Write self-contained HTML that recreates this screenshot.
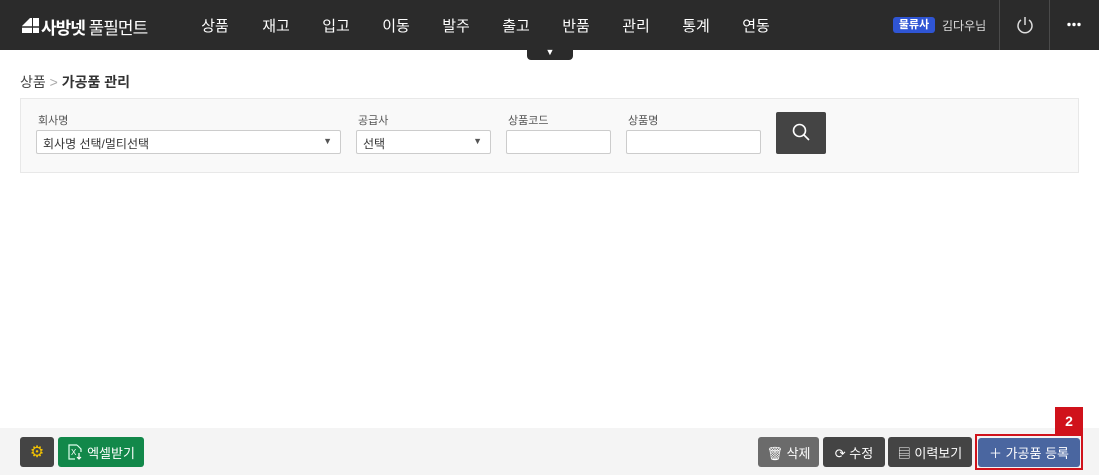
<!DOCTYPE html>
<html><head><meta charset="utf-8"><style>
*{margin:0;padding:0;box-sizing:border-box}
body{width:1099px;height:475px;position:relative;overflow:hidden;background:#fff;font-family:"Liberation Sans","Noto Sans CJK KR",sans-serif;color:#333}
.a{position:absolute}
.hd{left:0;top:0;width:1099px;height:50px;background:#2b2b2b}
.m{top:15px;color:#fff;font-size:15px;transform:translateX(-50%)}
.lbl{top:112px;font-size:11px;color:#555}
.in{top:130px;height:24px;border:1px solid #ccc;background:#fff;border-radius:2px;font-size:12px;padding:4px 6px;color:#333}
.btn{top:437px;height:30px;border-radius:3px;color:#fff;font-size:13px;display:flex;align-items:center;justify-content:center;gap:4px}
</style></head><body>
<div class="a hd"></div>
<svg class="a" style="left:22px;top:18px" width="17" height="15" viewBox="0 0 17 15"><path d="M0 8L8 0H10V15H0Z M11 0H17V15H11Z" fill="#fff"/><path d="M0 9H17" stroke="#2b2b2b" stroke-width="1.5"/></svg>
<div class="a" style="left:41px;top:14px;color:#fff;font-size:17px;font-weight:bold;letter-spacing:-1px">사방넷 <span style="font-weight:normal">풀필먼트</span></div>
<div class="a m" style="left:215px">상품</div><div class="a m" style="left:276px">재고</div><div class="a m" style="left:336px">입고</div><div class="a m" style="left:396px">이동</div><div class="a m" style="left:456px">발주</div><div class="a m" style="left:516px">출고</div><div class="a m" style="left:576px">반품</div><div class="a m" style="left:636px">관리</div><div class="a m" style="left:696px">통계</div><div class="a m" style="left:756px">연동</div>
<div class="a" style="left:527px;top:48px;width:46px;height:12px;background:#2b2b2b;border-radius:0 0 4px 4px;color:#fff;font-size:9px;text-align:center;line-height:9px">▼</div>
<div class="a" style="left:893px;top:17px;width:42px;height:16px;background:#2f55d4;border-radius:3px;color:#fff;font-size:11px;text-align:center;line-height:16px;font-weight:bold">물류사</div>
<div class="a" style="left:942px;top:17px;color:#ddd;font-size:12px">김다우님</div>
<div class="a" style="left:999px;top:0;width:1px;height:50px;background:#4a4a4a"></div>
<div class="a" style="left:1049px;top:0;width:1px;height:50px;background:#4a4a4a"></div>
<svg class="a" style="left:1015px;top:15px" width="20" height="20" viewBox="0 0 20 20"><path d="M6 5A7 7 0 1 0 14 5" fill="none" stroke="#ddd" stroke-width="1.5"/><path d="M10 2V10" stroke="#ddd" stroke-width="1.5"/></svg>
<svg class="a" style="left:1067px;top:22px" width="14" height="5" viewBox="0 0 14 5"><circle cx="2" cy="2.5" r="1.7" fill="#fff"/><circle cx="7" cy="2.5" r="1.7" fill="#fff"/><circle cx="12" cy="2.5" r="1.7" fill="#fff"/></svg>
<div class="a" style="left:20px;top:72px;font-size:14px;color:#444">상품 <span style="color:#aaa">&gt;</span> <b style="color:#333">가공품 관리</b></div>
<div class="a" style="left:20px;top:98px;width:1059px;height:75px;background:#f9f9f9;border:1px solid #e8e8e8"></div>
<div class="a lbl" style="left:38px">회사명</div><div class="a lbl" style="left:358px">공급사</div><div class="a lbl" style="left:508px">상품코드</div><div class="a lbl" style="left:628px">상품명</div>
<div class="a in" style="left:36px;width:305px">회사명 선택/멀티선택<span style="position:absolute;right:8px;top:5px;font-size:9px;color:#555">▼</span></div>
<div class="a in" style="left:356px;width:135px">선택<span style="position:absolute;right:8px;top:5px;font-size:9px;color:#555">▼</span></div>
<div class="a in" style="left:506px;width:105px"></div>
<div class="a in" style="left:626px;width:135px"></div>
<div class="a" style="left:776px;top:112px;width:50px;height:42px;background:#444;border-radius:2px"></div>
<svg class="a" style="left:791px;top:122px" width="20" height="20" viewBox="0 0 20 20"><circle cx="8.5" cy="8.5" r="6" fill="none" stroke="#fff" stroke-width="1.6"/><path d="M13 13L18 18" stroke="#fff" stroke-width="1.6"/></svg>
<div class="a" style="left:0;top:428px;width:1099px;height:47px;background:#f4f4f4"></div>
<div class="a btn" style="left:20px;width:34px;background:#444;color:#f5c400;font-size:16px">⚙</div>
<div class="a btn" style="left:58px;width:86px;background:#12884a"><svg width="16" height="16" viewBox="0 0 16 16"><path d="M10 1H2V15H8M10 1L14 5V8" fill="none" stroke="#dfe" stroke-width="1.2"/><text x="4" y="11" font-size="8" fill="#fff">X</text><path d="M12 9V15M10 13L12 15L14 13" fill="none" stroke="#fff" stroke-width="1.2"/></svg>엑셀받기</div>
<div class="a btn" style="left:758px;width:61px;background:#6b6b6b">🗑 삭제</div>
<div class="a btn" style="left:823px;width:62px;background:#444">⟳ 수정</div>
<div class="a btn" style="left:888px;width:84px;background:#444">▤ 이력보기</div>
<div class="a" style="left:975px;top:434px;width:108px;height:36px;border:2px solid #d0121b"></div>
<div class="a btn" style="left:978px;top:438px;width:102px;height:29px;background:#4a66a0">＋ 가공품 등록</div>
<div class="a" style="left:1055px;top:407px;width:28px;height:28px;background:#d0121b;color:#fff;font-weight:bold;font-size:14px;text-align:center;line-height:28px">2</div>
</body></html>
